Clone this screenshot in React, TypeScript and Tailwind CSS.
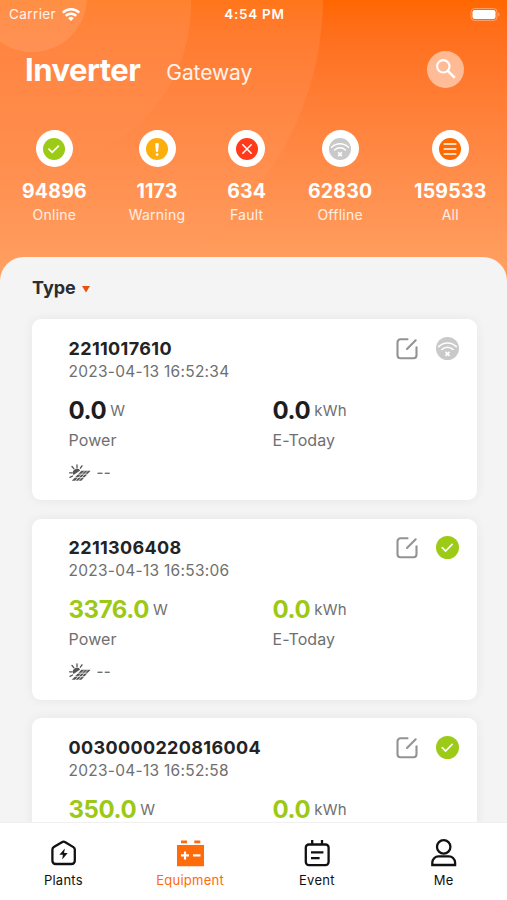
import type { ReactNode } from 'react';

type Status = 'online' | 'offline';

interface Inverter {
  sn: string;
  time: string;
  power: string;
  today: string;
  status: Status;
}

const inverters: Inverter[] = [
  { sn: '2211017610', time: '2023-04-13 16:52:34', power: '0.0', today: '0.0', status: 'offline' },
  { sn: '2211306408', time: '2023-04-13 16:53:06', power: '3376.0', today: '0.0', status: 'online' },
  { sn: '0030000220816004', time: '2023-04-13 16:52:58', power: '350.0', today: '0.0', status: 'online' },
];

export default function App() {
  return (
    <div className="relative flex h-[900px] w-[507px] flex-col overflow-hidden bg-[#f4f4f4] font-['Inter',sans-serif]">
      {/* Header */}
      <header className="relative h-[290px] shrink-0 overflow-hidden bg-linear-to-b from-[#ff6700] to-[#ffa366] text-white">
        <div className="absolute -top-[313px] -left-[297px] size-[620px] rounded-full bg-linear-to-b from-white/10 from-50% to-white/0 to-92%" />
        <div className="absolute -top-[157px] -left-[133px] size-[324px] rounded-full bg-linear-to-b from-white/9 from-50% to-white/0 to-98%" />
        <div className="absolute -top-[58px] -left-[23px] size-[110px] rounded-full bg-white/10" />

        <div className="relative">
          <StatusBar />

          <div className="flex h-[82px] items-center pr-[43px] pl-[25px]">
            <h1 className="mt-px text-[31px] leading-[40px] font-bold tracking-[-0.5px]">Inverter</h1>
            <span className="mt-[8px] ml-[26px] text-[21px] leading-[28px] tracking-[-0.1px] text-white/90">Gateway</span>
            <button className="ml-auto flex size-[37px] items-center justify-center rounded-full bg-white/50">
              <SearchIcon className="size-[22px]" />
            </button>
          </div>

          <div className="mt-[20px] flex justify-between pr-[20.5px] pl-[22px]">
            <Stat value="94896" label="Online"><OnlineIcon className="size-[22px]" /></Stat>
            <Stat value="1173" label="Warning"><WarningIcon className="size-[22px]" /></Stat>
            <Stat value="634" label="Fault"><FaultIcon className="size-[22px]" /></Stat>
            <Stat value="62830" label="Offline"><OfflineIcon className="size-[22px]" /></Stat>
            <Stat value="159533" label="All"><AllIcon className="size-[22px]" /></Stat>
          </div>
        </div>
      </header>

      {/* Device list */}
      <main className="relative -mt-[33px] min-h-0 flex-1 overflow-hidden rounded-t-[24px] bg-[#f4f4f4]">
        <div className="flex h-[62px] items-center gap-[6px] pl-[32px]">
          <span className="text-[18px] leading-[24px] font-bold text-[#2b2d30]">Type</span>
          <svg className="mt-[3px] h-[7px] w-[8px]" viewBox="0 0 8 7" fill="#e65311">
            <path d="M0 0h8L4 6.5z" />
          </svg>
        </div>
        <div className="flex flex-col gap-[18.5px] pr-[30.5px] pl-[31.5px]">
          {inverters.map((item) => (
            <InverterCard key={item.sn} item={item} />
          ))}
        </div>
      </main>

      {/* Tab bar */}
      <nav className="relative grid h-[78px] shrink-0 grid-cols-4 border-t border-[#f0f0f0] bg-white">
        <Tab label="Plants"><PlantIcon className="h-[28px] w-[28px]" /></Tab>
        <Tab label="Equipment" active><EquipmentIcon className="h-[28px] w-[28px]" /></Tab>
        <Tab label="Event"><EventIcon className="h-[28px] w-[28px]" /></Tab>
        <Tab label="Me"><MeIcon className="h-[28px] w-[28px]" /></Tab>
      </nav>
    </div>
  );
}

function StatusBar() {
  return (
    <div className="grid h-[28px] grid-cols-3 items-center pr-[7px] pl-[9px] text-[13.5px] leading-[16px]">
      <div className="flex items-center gap-[6px]">
        <span className="tracking-[0.4px] text-white/90">Carrier</span>
        <WifiIcon className="h-[13px] w-[18px]" />
      </div>
      <span className="text-center font-semibold tracking-[0.7px] whitespace-nowrap">4:54 PM</span>
      <BatteryIcon className="h-[13px] w-[30px] justify-self-end" />
    </div>
  );
}

function Stat({ value, label, children }: { value: string; label: string; children: ReactNode }) {
  return (
    <div className="flex flex-col items-center">
      <div className="flex size-[37px] items-center justify-center rounded-full bg-white">{children}</div>
      <span className="mt-[12px] text-[19.5px] leading-[24px] font-bold tracking-[0.2px]">{value}</span>
      <span className="mt-[2px] text-[14px] leading-[20px] tracking-[0.25px] text-white/85">{label}</span>
    </div>
  );
}

function InverterCard({ item }: { item: Inverter }) {
  const valueColor = item.status === 'online' ? 'text-[#9bc916]' : 'text-[#1d1d1f]';

  return (
    <div className="h-[181px] shrink-0 rounded-[9px] bg-white pt-[17.5px] pr-[18px] pl-[37px] text-[#6f6f6f] shadow-[0_0_12px_rgba(0,0,0,0.06)]">
      <div className="flex items-start justify-between">
        <div>
          <h2 className="text-[18px] leading-[24px] font-bold tracking-[0.35px] text-[#222325]">{item.sn}</h2>
          <p className="text-[15.5px] leading-[22px] tracking-[0.27px]">{item.time}</p>
        </div>
        <div className="flex gap-[17px]">
          <EditIcon className="size-[24px]" />
          {item.status === 'online' ? <OnlineIcon className="size-[23px]" /> : <OfflineIcon className="size-[23px]" />}
        </div>
      </div>

      <div className="mt-[13px] grid grid-cols-[204px_1fr]">
        <Reading value={item.power} unit="W" label="Power" color={valueColor} />
        <Reading value={item.today} unit="kWh" label="E-Today" color={valueColor} />
      </div>

      <div className="mt-[12px] flex items-center gap-[6px]">
        <SolarIcon className="h-[18px] w-[22px]" />
        <span className="text-[15px] leading-[20px] font-medium tracking-[0.4px]">--</span>
      </div>
    </div>
  );
}

function Reading({ value, unit, label, color }: { value: string; unit: string; label: string; color: string }) {
  return (
    <div>
      <div className="flex h-[30px] items-center gap-[4px]">
        <span className={`text-[24px] leading-[30px] font-bold tracking-[-0.4px] ${color}`}>{value}</span>
        <span className="text-[15px] leading-[20px] tracking-[0.2px]">{unit}</span>
      </div>
      <p className="mt-[3px] text-[16px] leading-[22px] tracking-[0.1px]">{label}</p>
    </div>
  );
}

function Tab({ label, active, children }: { label: string; active?: boolean; children: ReactNode }) {
  return (
    <button className={`flex flex-col items-center pt-[16px] ${active ? 'text-[#ff6a0a]' : 'text-[#111111]'}`}>
      {children}
      <span className="mt-[4px] text-[13px] leading-[18px] tracking-[0.25px]">{label}</span>
    </button>
  );
}

function WifiIcon({ className }: { className?: string }) {
  return (
    <svg className={className} viewBox="0 0 18 13" fill="none" stroke="currentColor" strokeWidth={2.5}>
      <path d="M.8 4.7a11.6 11.6 0 0116.4 0M3.8 7.9a7.4 7.4 0 0110.4 0" />
      <path d="M9 13L6.2 10.2a4 4 0 015.6 0z" fill="currentColor" stroke="none" />
    </svg>
  );
}

function BatteryIcon({ className }: { className?: string }) {
  return (
    <svg className={className} viewBox="0 0 30 13" fill="none">
      <rect x="1" y=".5" width="26" height="12" rx="3.5" stroke="#fff" strokeOpacity=".35" />
      <rect x="2.5" y="2" width="23" height="9" rx="2.2" fill="#fff" />
      <path d="M28.3 4.5c1.6.6 1.6 3.4 0 4z" fill="#fff" fillOpacity=".5" />
    </svg>
  );
}

function SearchIcon({ className }: { className?: string }) {
  return (
    <svg className={className} viewBox="0 0 22 22" fill="none" stroke="currentColor" strokeWidth={2.1}>
      <circle cx="8.3" cy="8.3" r="6.2" />
      <path d="M12.8 12.8l7 7" strokeWidth={2.5} />
    </svg>
  );
}

function OnlineIcon({ className }: { className?: string }) {
  return (
    <svg className={className} viewBox="0 0 22 22" fill="none">
      <circle cx="11" cy="11" r="11" fill="#9bcb14" />
      <path d="M6 11.2l3.2 3.2 6.2-6.3" stroke="#fff" strokeWidth={1.7} strokeLinecap="round" />
    </svg>
  );
}

function WarningIcon({ className }: { className?: string }) {
  return (
    <svg className={className} viewBox="0 0 22 22">
      <circle cx="11" cy="11" r="11" fill="#fbae0c" />
      <path d="M9.1 5.2h3.8l-.8 8.6H9.9z" fill="#fff" />
      <circle cx="11" cy="16.6" r="1.4" fill="#fff" />
    </svg>
  );
}

function FaultIcon({ className }: { className?: string }) {
  return (
    <svg className={className} viewBox="0 0 22 22" fill="none">
      <circle cx="11" cy="11" r="11" fill="#ff3b1c" />
      <path d="M6.8 6.8l8.4 8.4M15.2 6.8l-8.4 8.4" stroke="#fff" strokeWidth={1.5} strokeLinecap="round" />
    </svg>
  );
}

function OfflineIcon({ className }: { className?: string }) {
  return (
    <svg className={className} viewBox="0 0 22 22" fill="none" stroke="#fff" strokeWidth={1.4}>
      <circle cx="11" cy="11" r="11" fill="#c9c9c9" stroke="none" />
      <path d="M2.6 9.2c4.7-4.6 12.1-4.6 16.8 0M5.6 12c3.1-3 7.7-3 10.8 0" strokeLinecap="round" />
      <path d="M9.1 14.3l3.8 3.8M12.9 14.3l-3.8 3.8" strokeWidth={1.6} />
    </svg>
  );
}

function AllIcon({ className }: { className?: string }) {
  return (
    <svg className={className} viewBox="0 0 22 22" fill="none">
      <circle cx="11" cy="11" r="11" fill="#ff6a00" />
      <path d="M5.2 6h11.6M5.2 11h11.6M5.2 16h11.6" stroke="#fff" strokeWidth={1.6} strokeLinecap="round" />
    </svg>
  );
}

function EditIcon({ className }: { className?: string }) {
  return (
    <svg className={className} viewBox="0 0 24 24" fill="none" stroke="#939393" strokeWidth={2.1} strokeLinecap="round">
      <path d="M12.5 2.3H5.5A3 3 0 002.5 5.3v13a3 3 0 003 3h13a3 3 0 003-3v-8" />
      <path d="M12 12l8.7-8.7" />
    </svg>
  );
}

function SolarIcon({ className }: { className?: string }) {
  return (
    <svg className={className} viewBox="0 0 22 18" fill="none" stroke="#555" strokeWidth={1.3}>
      <path d="M8 .8v2.6M3 2.5l1.8 2.2M13 1.8l-1.6 2.4M.6 8.8h2.6M1 13.4l2.6-1.4" strokeLinecap="round" />
      <path d="M4.6 11a3.7 3.7 0 016.6-4.6z" fill="#555" stroke="none" />
      {/* panel */}
      <path d="M12.4 6.8h9.2L12.4 16.8H2.8z" fill="#555" stroke="none" />
      <path d="M16 6.4L6.2 17M19 6.4L9.4 17M8 10.2h12M5 13.6h12" stroke="#fff" strokeWidth={0.7} />
    </svg>
  );
}

function PlantIcon({ className }: { className?: string }) {
  return (
    <svg className={className} viewBox="0 0 28 28" fill="none">
      <path
        d="M12.9 3.2L4.8 8.1a3 3 0 00-1.4 2.5v11.2A3.2 3.2 0 006.6 25h16a3.2 3.2 0 003.2-3.2V10.6a3 3 0 00-1.4-2.5L16.3 3.2a3.2 3.2 0 00-3.4 0z"
        stroke="currentColor"
        strokeWidth={2.3}
      />
      <path d="M15.8 9.5l-5.4 6.3h3.5l-.7 4.7 5.5-6.5h-3.6z" fill="currentColor" />
    </svg>
  );
}

function EquipmentIcon({ className }: { className?: string }) {
  return (
    <svg className={className} viewBox="0 0 28 28" fill="none">
      <path d="M5 1.5h6v2.8H5zM18.3 1.5h6v2.8h-6zM1 6h27v21.2H1z" fill="currentColor" />
      <path d="M5 16.4h8M9 12.4v8M17 16.4h7.5" stroke="#fff" strokeWidth={2.2} />
    </svg>
  );
}

function EventIcon({ className }: { className?: string }) {
  return (
    <svg className={className} viewBox="0 0 28 28" fill="none" stroke="currentColor" strokeWidth={2.3}>
      <rect x="2.8" y="5.5" width="22.8" height="20.6" rx="3" />
      <path d="M9.2 1v4.5M19 1v4.5M8 13.4h12.4M8 19.2h8.6" />
    </svg>
  );
}

function MeIcon({ className }: { className?: string }) {
  return (
    <svg className={className} viewBox="0 0 28 28" fill="none" stroke="currentColor" strokeWidth={2.3}>
      <circle cx="13.7" cy="7.9" r="6.7" />
      <path d="M2.3 26v-2.4a6.2 6.2 0 016.2-6.2h10.4a6.2 6.2 0 016.2 6.2V26z" />
    </svg>
  );
}
